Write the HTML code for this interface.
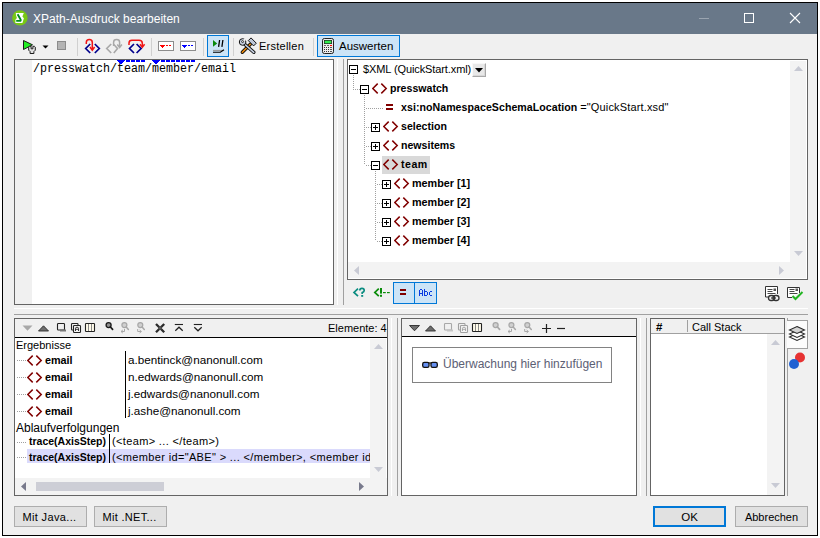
<!DOCTYPE html>
<html><head><meta charset="utf-8">
<style>
*{margin:0;padding:0;box-sizing:border-box}
html,body{width:820px;height:538px;overflow:hidden;background:#fff;font-family:"Liberation Sans",sans-serif;font-size:11px;color:#000}
.a{position:absolute}
#win{position:absolute;left:2px;top:2px;width:816px;height:534px;border:1px solid #000;background:#f0f0f0}
#title{position:absolute;left:3px;top:3px;width:814px;height:31px;background:#697889}
.box{position:absolute;border:1px solid #646464;background:#fff}
.sb{position:absolute;background:#f3f3f3}
.sep{position:absolute;width:1px;background:#d0d0d0}
.t{position:absolute;white-space:nowrap;line-height:14px}
.b{font-weight:bold}
.btn{position:absolute;border:1px solid #adadad;background:#e1e1e1;text-align:center;line-height:21px;font-size:11px}

.pb{position:absolute;width:9px;height:9px;border:1px solid #000;background:#fff}
.pb::before{content:"";position:absolute;left:1px;top:3px;width:5px;height:1px;background:#000}
.pb.p::after{content:"";position:absolute;left:3px;top:1px;width:1px;height:5px;background:#000}
.dv{position:absolute;width:1px;background:repeating-linear-gradient(to bottom,#a0a0a0 0,#a0a0a0 1px,transparent 1px,transparent 2px)}
.dh{position:absolute;height:1px;background:repeating-linear-gradient(to right,#a0a0a0 0,#a0a0a0 1px,transparent 1px,transparent 2px)}
.el{position:absolute;width:16px;height:12px}
</style></head><body>
<div id="win"></div>
<div id="title"></div>
<!-- title icon -->
<svg class="a" style="left:10px;top:9px" width="20" height="20" viewBox="10 9 20 20">
<circle cx="19.9" cy="17.9" r="7.7" fill="#78c814"/>
<path d="M15.8 13 H23.8 L22.4 16.4 L23.9 18.3 L22.4 22.9 H15.4 V19.8 L16.9 17.9 L16 15.3 Z" fill="#fff"/>
<path d="M17.6 14.2 L20.6 19.6 L20.8 21 M16.2 20.9 H21.2" fill="none" stroke="#008c1e" stroke-width="1.9"/>
</svg>
<div class="t" style="left:33px;top:12px;font-size:12px;color:#fff">XPath-Ausdruck bearbeiten</div>
<div class="a" style="left:699px;top:18px;width:10px;height:1px;background:#9aa4b0"></div>
<div class="a" style="left:744px;top:13px;width:10px;height:10px;border:1px solid #fff"></div>
<svg class="a" style="left:789px;top:12px" width="12" height="12" viewBox="0 0 12 12"><path d="M1 1L11 11M11 1L1 11" stroke="#fff" stroke-width="1.1"/></svg>


<!-- toolbar -->
<svg class="a" style="left:20px;top:38px" width="20" height="18" viewBox="20 38 20 18">
<path d="M23.5 40.5 L32.5 44.8 L23.5 49.5 Z" fill="#22ee22" stroke="#1a1a1a" stroke-width="1"/>
<path d="M28.7 47.2 L29.6 46.3 H31.1 V48.8 H32.9 V46.3 H34.4 L35.3 47.2 V50.2 L33.9 51.6 V53.5 H30.1 V51.6 L28.7 50.2 Z" fill="#e0e0e0" stroke="#1a1a1a" stroke-width="1"/>
</svg>
<svg class="a" style="left:42px;top:45px" width="7" height="4" viewBox="0 0 7 4"><path d="M0.5 0.5 L6.5 0.5 L3.5 3.5Z" fill="#000"/></svg>
<div class="a" style="left:57px;top:41px;width:9px;height:9px;background:#b4b4b4;border:1px solid #8c8c8c"></div>
<div class="sep" style="left:77px;top:38px;height:18px"></div>
<svg class="a" style="left:80px;top:36px" width="70" height="20" viewBox="80 36 70 20">
<path d="M90.2 44 L85.7 48.5 L90.2 53 M94.8 44 L99.3 48.5 L94.8 53" fill="none" stroke="#00008c" stroke-width="1.7"/>
<path d="M86.3 44 V42.5 Q86.3 39.6 89.3 39.6 Q92.3 39.6 92.3 42.5 V49" fill="none" stroke="#f01414" stroke-width="1.5"/>
<path d="M90 47 L92.3 50.3 L94.6 47" fill="none" stroke="#f01414" stroke-width="1.5"/>
<path d="M111.2 44 L106.7 48.5 L111.2 53" fill="none" stroke="#a8a8a8" stroke-width="1.6"/>
<path d="M113.8 44.5 L117.5 48.5 L113.8 53" fill="none" stroke="#a8a8a8" stroke-width="1.6"/>
<path d="M113.6 46 V42.3 Q113.6 39.6 116.6 39.6 Q119.6 39.6 119.6 42.3 V46.5" fill="none" stroke="#a8a8a8" stroke-width="1.5"/>
<path d="M117.3 44.5 L119.6 47.5 L121.9 44.5" fill="none" stroke="#a8a8a8" stroke-width="1.5"/>
<path d="M134 44 L129.5 48.5 L134 53 M136.6 44 L141.1 48.5 L136.6 53" fill="none" stroke="#00008c" stroke-width="1.7"/>
<path d="M129 45 V43 Q129 40.3 132 40.3 H139 Q142.3 40.3 142.3 43.3 V46.5" fill="none" stroke="#f01414" stroke-width="1.5"/>
<path d="M140 44.3 L142.3 47.3 L144.6 44.3" fill="none" stroke="#f01414" stroke-width="1.5"/>
</svg>
<div class="sep" style="left:151px;top:38px;height:18px"></div>
<svg class="a" style="left:158px;top:41px" width="16" height="10" viewBox="0 0 16 10" shape-rendering="crispEdges"><rect x="0.5" y="0.5" width="15" height="9" fill="#fff" stroke="#8c8c8c"/><path d="M2 4h5v1h-1v1h-1v1h-1v-1h-1v-1h-1z" fill="#f00"/><rect x="8" y="4" width="2" height="1" fill="#f00"/><rect x="11" y="4" width="2" height="1" fill="#f00"/></svg>
<svg class="a" style="left:180px;top:41px" width="16" height="10" viewBox="0 0 16 10" shape-rendering="crispEdges"><rect x="0.5" y="0.5" width="15" height="9" fill="#fff" stroke="#8c8c8c"/><path d="M2 4h5v1h-1v1h-1v1h-1v-1h-1v-1h-1z" fill="#00f"/><rect x="8" y="4" width="2" height="1" fill="#00f"/><rect x="11" y="4" width="2" height="1" fill="#00f"/></svg>
<div class="sep" style="left:203px;top:38px;height:18px"></div>
<div class="a" style="left:207px;top:35px;width:22px;height:22px;background:#cce4f7;border:1px solid #0078d7"></div>
<svg class="a" style="left:208px;top:36px" width="20" height="20" viewBox="208 36 20 20">
<path d="M213 40 L217.2 43.4 L213 46.8 Z" fill="#0a8a0a"/>
<path d="M219.6 40 L218.6 46.8 M222.9 40 L221.9 46.8" stroke="#000" stroke-width="1.3"/>
<path d="M213 50.5 H223.5" stroke="#9a9a9a" stroke-width="1.2"/>
<path d="M213 52.3 H220.3 L224 49.8" stroke="#000" stroke-width="1.1" fill="none"/>
</svg>
<div class="sep" style="left:233px;top:38px;height:18px"></div>
<svg class="a" style="left:238px;top:36px" width="20" height="20" viewBox="238 36 20 20">
<path d="M242.3 52.3 L250.3 44.3" stroke="#111" stroke-width="3.4" stroke-linecap="round"/>
<path d="M242.3 52.3 L250.3 44.3" stroke="#f28c0a" stroke-width="1.6" stroke-linecap="round"/>
<path d="M248.3 40.6 L251 37.9 L256.3 43.2 L253.6 45.9 Z" fill="#bcc6d8" stroke="#111" stroke-width="1"/>
<path d="M245 44.5 L253.8 52.3" stroke="#111" stroke-width="3.4" stroke-linecap="round"/>
<path d="M245 44.5 L253.8 52.3" stroke="#c8d2e4" stroke-width="1.6" stroke-linecap="round"/>
<circle cx="242.6" cy="42" r="3.3" fill="#c8d2e4" stroke="#111" stroke-width="1"/><path d="M242.8 41.8 L245.5 39" stroke="#f0f0f0" stroke-width="2.2"/><circle cx="242.6" cy="41.6" r="1" fill="#f0f0f0" stroke="#111" stroke-width="0.8"/>
</svg>
<div class="t" style="left:259px;top:39px;font-size:11px;letter-spacing:0.25px;color:#000">Erstellen</div>
<div class="sep" style="left:313px;top:38px;height:18px"></div>
<div class="a" style="left:317px;top:35px;width:83px;height:22px;background:#cce4f7;border:1px solid #0078d7"></div>
<svg class="a" style="left:320px;top:36px" width="16" height="20" viewBox="320 36 16 20">
<rect x="322.5" y="38.5" width="11" height="15" rx="1.8" fill="#ececec" stroke="#222" stroke-width="1"/>
<rect x="324" y="40" width="8" height="4" fill="#222"/><rect x="324.7" y="40.7" width="6.6" height="2.6" fill="#30ee50"/>
<g shape-rendering="crispEdges"><rect x="324" y="47" width="1" height="1" fill="#333"/><rect x="326" y="47" width="1" height="1" fill="#333"/><rect x="328" y="47" width="1" height="1" fill="#333"/><rect x="330" y="47" width="2" height="1" fill="#555"/><rect x="324" y="49" width="1" height="1" fill="#333"/><rect x="326" y="49" width="1" height="1" fill="#333"/><rect x="328" y="49" width="1" height="1" fill="#333"/><rect x="330" y="49" width="2" height="1" fill="#555"/><rect x="324" y="51" width="1" height="1" fill="#333"/><rect x="326" y="51" width="1" height="1" fill="#333"/><rect x="328" y="51" width="1" height="1" fill="#333"/><rect x="330" y="51" width="2" height="1" fill="#555"/><rect x="324" y="45" width="2" height="1" fill="#666"/><rect x="327" y="45" width="2" height="1" fill="#666"/><rect x="330" y="45" width="2" height="1" fill="#f00"/></g>
</svg>
<div class="t" style="left:339px;top:39px;font-size:11.5px;color:#000">Auswerten</div>

<!-- editor -->
<div class="box" style="left:14px;top:59px;width:320px;height:246px"></div>
<div class="a" style="left:15px;top:60px;width:17px;height:244px;background:#f0f0f0"></div>
<div class="t" style="left:33px;top:62px;font-family:'Liberation Mono',monospace;font-size:12.3px;transform:scaleX(0.9485);transform-origin:0 0">/presswatch/team/member/email</div>

<svg class="a" style="left:0;top:0" width="820" height="80" viewBox="0 0 820 80" shape-rendering="crispEdges"><path d="M117 60h8v1h-1v1h-1v1h-1v1h-2v-1h-1v-1h-1v-1h-1z" fill="#0000ff"/><rect x="126" y="60" width="4" height="2" fill="#0000ff"/><rect x="131" y="60" width="4" height="2" fill="#0000ff"/><rect x="136" y="60" width="4" height="2" fill="#0000ff"/><rect x="141" y="60" width="4" height="2" fill="#0000ff"/><path d="M152 60h8v1h-1v1h-1v1h-1v1h-2v-1h-1v-1h-1v-1h-1z" fill="#0000ff"/><rect x="161" y="60" width="4" height="2" fill="#0000ff"/><rect x="166" y="60" width="4" height="2" fill="#0000ff"/><rect x="171" y="60" width="4" height="2" fill="#0000ff"/><rect x="176" y="60" width="4" height="2" fill="#0000ff"/><rect x="181" y="60" width="4" height="2" fill="#0000ff"/><rect x="186" y="60" width="4" height="2" fill="#0000ff"/><rect x="191" y="60" width="4" height="2" fill="#0000ff"/></svg>
<!-- splitter v -->
<div class="a" style="left:337px;top:59px;width:1px;height:246px;background:#fff"></div>
<div class="a" style="left:343px;top:59px;width:1px;height:246px;background:#a0a0a0"></div>

<!-- tree panel -->
<div class="box" style="left:347px;top:59px;width:461px;height:221px"></div>
<div class="sb" style="left:790px;top:61px;width:16px;height:217px"></div>
<div class="sb" style="left:348px;top:262px;width:458px;height:16px"></div>

<!-- tree -->
<div class="pb" style="left:349px;top:65px"></div>
<div class="t" style="left:363px;top:62px;font-size:11px;letter-spacing:-0.1px;color:#000">$XML (QuickStart.xml)</div>
<div class="a" style="left:472px;top:63px;width:14px;height:14px;background:#e8e8e8;border:1px solid #a8a8a8;border-top-color:#f8f8f8;border-left-color:#f8f8f8;box-shadow:inset -1px -1px 0 #d8d8d8"></div>
<svg class="a" style="left:475px;top:68px" width="8" height="5" viewBox="0 0 8 5"><path d="M0 0 H8 L4 4.5Z" fill="#000"/></svg>
<div class="dv" style="left:353px;top:75px;height:15px"></div>
<div class="dh" style="left:355px;top:89px;width:5px"></div>
<div class="pb" style="left:360px;top:85px"></div>
<svg class="el" style="left:372px;top:83px" viewBox="0 0 16 12"><path d="M5.7 0.6 L0.8 5.5 L5.7 10.4 M9.3 0.6 L14.2 5.5 L9.3 10.4" fill="none" stroke="#800000" stroke-width="1.5"/></svg>
<div class="t b" style="left:390px;top:81px;font-size:10.6px">presswatch</div>
<div class="dv" style="left:364px;top:95px;height:70px"></div>
<div class="dh" style="left:366px;top:108px;width:18px"></div>
<div class="a" style="left:386px;top:104px;width:7px;height:2px;background:#800000"></div>
<div class="a" style="left:386px;top:108px;width:7px;height:2px;background:#800000"></div>
<div class="t" style="left:401px;top:100px;font-size:11px"><b style="font-size:10.6px;letter-spacing:0.05px">xsi:noNamespaceSchemaLocation</b> =<span style="letter-spacing:0.15px">"QuickStart.xsd"</span></div>
<div class="dh" style="left:366px;top:127px;width:5px"></div>
<div class="pb p" style="left:371px;top:123px"></div>
<svg class="el" style="left:383px;top:121px" viewBox="0 0 16 12"><path d="M5.7 0.6 L0.8 5.5 L5.7 10.4 M9.3 0.6 L14.2 5.5 L9.3 10.4" fill="none" stroke="#800000" stroke-width="1.5"/></svg>
<div class="t b" style="left:401px;top:119px;font-size:10.6px">selection</div>
<div class="dh" style="left:366px;top:146px;width:5px"></div>
<div class="pb p" style="left:371px;top:142px"></div>
<svg class="el" style="left:383px;top:140px" viewBox="0 0 16 12"><path d="M5.7 0.6 L0.8 5.5 L5.7 10.4 M9.3 0.6 L14.2 5.5 L9.3 10.4" fill="none" stroke="#800000" stroke-width="1.5"/></svg>
<div class="t b" style="left:401px;top:138px;font-size:10.6px">newsitems</div>
<div class="dh" style="left:366px;top:165px;width:5px"></div>
<div class="a" style="left:382px;top:156px;width:48px;height:18px;background:#d9d9d9"></div>
<div class="pb" style="left:371px;top:161px"></div>
<svg class="el" style="left:383px;top:159px" viewBox="0 0 16 12"><path d="M5.7 0.6 L0.8 5.5 L5.7 10.4 M9.3 0.6 L14.2 5.5 L9.3 10.4" fill="none" stroke="#800000" stroke-width="1.5"/></svg>
<div class="t b" style="left:401px;top:157px;font-size:10.6px;letter-spacing:0.5px">team</div>
<div class="dv" style="left:375px;top:171px;height:70px"></div>
<div class="dh" style="left:377px;top:184px;width:5px"></div>
<div class="pb p" style="left:382px;top:180px"></div>
<svg class="el" style="left:394px;top:178px" viewBox="0 0 16 12"><path d="M5.7 0.6 L0.8 5.5 L5.7 10.4 M9.3 0.6 L14.2 5.5 L9.3 10.4" fill="none" stroke="#800000" stroke-width="1.5"/></svg>
<div class="t b" style="left:412px;top:176px;font-size:10.8px">member [1]</div>
<div class="dh" style="left:377px;top:203px;width:5px"></div>
<div class="pb p" style="left:382px;top:199px"></div>
<svg class="el" style="left:394px;top:197px" viewBox="0 0 16 12"><path d="M5.7 0.6 L0.8 5.5 L5.7 10.4 M9.3 0.6 L14.2 5.5 L9.3 10.4" fill="none" stroke="#800000" stroke-width="1.5"/></svg>
<div class="t b" style="left:412px;top:195px;font-size:10.8px">member [2]</div>
<div class="dh" style="left:377px;top:222px;width:5px"></div>
<div class="pb p" style="left:382px;top:218px"></div>
<svg class="el" style="left:394px;top:216px" viewBox="0 0 16 12"><path d="M5.7 0.6 L0.8 5.5 L5.7 10.4 M9.3 0.6 L14.2 5.5 L9.3 10.4" fill="none" stroke="#800000" stroke-width="1.5"/></svg>
<div class="t b" style="left:412px;top:214px;font-size:10.8px">member [3]</div>
<div class="dh" style="left:377px;top:241px;width:5px"></div>
<div class="pb p" style="left:382px;top:237px"></div>
<svg class="el" style="left:394px;top:235px" viewBox="0 0 16 12"><path d="M5.7 0.6 L0.8 5.5 L5.7 10.4 M9.3 0.6 L14.2 5.5 L9.3 10.4" fill="none" stroke="#800000" stroke-width="1.5"/></svg>
<div class="t b" style="left:412px;top:233px;font-size:10.8px">member [4]</div>
<!-- splitter h -->
<div class="a" style="left:14px;top:308px;width:794px;height:1px;background:#fff"></div>
<div class="a" style="left:14px;top:314px;width:794px;height:1px;background:#a0a0a0"></div>

<!-- bottom left panel -->
<div class="box" style="left:14px;top:318px;width:374px;height:178px"></div>
<div class="a" style="left:15px;top:319px;width:372px;height:19px;background:#f0f0f0;border-bottom:1px solid #000"></div>
<div class="sb" style="left:370px;top:339px;width:16px;height:139px"></div>
<div class="sb" style="left:15px;top:478px;width:372px;height:17px"></div>

<div class="a" style="left:391px;top:318px;width:1px;height:178px;background:#fff"></div>
<div class="a" style="left:397px;top:318px;width:1px;height:178px;background:#a0a0a0"></div>

<!-- middle panel -->
<div class="box" style="left:401px;top:318px;width:236px;height:178px"></div>
<div class="a" style="left:402px;top:319px;width:234px;height:18px;background:#f0f0f0;border-bottom:1px solid #000"></div>

<div class="a" style="left:640px;top:318px;width:1px;height:178px;background:#fff"></div>
<div class="a" style="left:646px;top:318px;width:1px;height:178px;background:#a0a0a0"></div>

<!-- call stack -->
<div class="box" style="left:650px;top:318px;width:135px;height:178px"></div>
<div class="a" style="left:651px;top:319px;width:133px;height:15px;background:#f0f0f0;border-bottom:1px solid #a0a0a0"></div>
<div class="sb" style="left:767px;top:334px;width:17px;height:161px"></div>

<!-- tree toolbar -->
<svg class="a" style="left:348px;top:284px" width="46" height="18" viewBox="348 284 46 18">
<path d="M358 288.6 L354 292.4 L358 296.2" fill="none" stroke="#0a8c80" stroke-width="1.7"/>
<path d="M359.8 290.5 Q359.8 288.3 362 288.3 Q364.2 288.3 364.2 290.4 Q364.2 291.8 362.2 292.6 V294" fill="none" stroke="#0a8c80" stroke-width="1.7"/>
<rect x="361.2" y="295" width="2" height="1.8" fill="#0a8c80"/>
<path d="M378.8 288.6 L374.8 292.4 L378.8 296.2" fill="none" stroke="#0a8c0a" stroke-width="1.7"/>
<rect x="380" y="288" width="2" height="5.6" fill="#0a8c0a"/><rect x="380" y="294.8" width="2" height="2" fill="#0a8c0a"/>
<rect x="383" y="292" width="2.8" height="1.2" fill="#0a8c0a"/><rect x="387" y="292" width="2.8" height="1.2" fill="#0a8c0a"/>
</svg>

<div class="a" style="left:393px;top:282px;width:22px;height:22px;background:#cce4f7;border:1px solid #0078d7"></div>
<div class="a" style="left:414px;top:282px;width:23px;height:22px;background:#cce4f7;border:1px solid #0078d7"></div>
<div class="a" style="left:400px;top:289px;width:6px;height:2px;background:#800000"></div>
<div class="a" style="left:400px;top:293px;width:6px;height:2px;background:#800000"></div>
<svg class="a" style="left:0;top:280px" width="820" height="30" viewBox="0 280 820 30" shape-rendering="crispEdges"><rect x="419" y="290" width="1" height="6" fill="#0a3ce0"/><rect x="422" y="290" width="1" height="6" fill="#0a3ce0"/><rect x="420" y="289" width="2" height="1" fill="#0a3ce0"/><rect x="420" y="293" width="2" height="1" fill="#0a3ce0"/><rect x="424" y="289" width="1" height="7" fill="#0a3ce0"/><rect x="425" y="291" width="2" height="1" fill="#0a3ce0"/><rect x="427" y="292" width="1" height="3" fill="#0a3ce0"/><rect x="425" y="295" width="2" height="1" fill="#0a3ce0"/><rect x="429" y="292" width="1" height="3" fill="#0a3ce0"/><rect x="430" y="291" width="2" height="1" fill="#0a3ce0"/><rect x="430" y="295" width="2" height="1" fill="#0a3ce0"/></svg>
<svg class="a" style="left:764px;top:285px" width="18" height="17" viewBox="0 0 18 17">
<path d="M1.5 12 V1.5 H13.5 V9" fill="#fff" stroke="#333" stroke-width="1"/>
<path d="M1.5 12 H4" stroke="#333"/>
<path d="M3.5 4.5h5M3.5 6.5h5M3.5 8.5h8" stroke="#333" stroke-width="0.9"/><rect x="9.5" y="3.5" width="2.5" height="2.5" fill="#555"/>
<rect x="4.5" y="10.5" width="6" height="5" rx="2.5" fill="none" stroke="#333" stroke-width="1.3"/>
<rect x="9" y="10.5" width="6" height="5" rx="2.5" fill="none" stroke="#333" stroke-width="1.3"/>
<path d="M7 13h5" stroke="#333" stroke-width="1.2"/>
</svg>
<svg class="a" style="left:786px;top:286px" width="18" height="15" viewBox="0 0 18 15">
<path d="M6 11.5 H1.5 V1.5 H13.5 V7" fill="#fff" stroke="#333" stroke-width="1"/>
<path d="M3.5 3.5h5M3.5 5.5h5M3.5 7.5h8" stroke="#333" stroke-width="0.9"/><rect x="9.5" y="2.5" width="2.5" height="2.5" fill="#555"/>
<path d="M6.5 10 L9.5 13 L16.5 6" fill="none" stroke="#22b422" stroke-width="2"/>
</svg>
<svg class="a" style="left:22px;top:325px" width="11" height="7" viewBox="0 0 11 7"><path d="M0.5 0.5 H10.5 L5.5 5.8Z" fill="#a8a8a8"/></svg>
<svg class="a" style="left:38px;top:325px" width="11" height="7" viewBox="0 0 11 7"><path d="M0.5 6 H10.5 L5.5 0.8Z" fill="#6e6e6e" stroke="#2a2a2a" stroke-width="0.9" stroke-linejoin="round"/></svg>
<svg class="a" style="left:54px;top:319px" width="44" height="18" viewBox="54 319 44 18"><g transform="translate(0 0)"><rect x="57.5" y="323.5" width="7" height="6.5" rx="0.8" fill="none" stroke="#222" stroke-width="1.1"/><rect x="60" y="329.5" width="6" height="2" fill="#777"/><rect x="71.5" y="323.5" width="6.5" height="6.5" rx="0.8" fill="none" stroke="#222" stroke-width="1.1"/><rect x="73.5" y="325.5" width="7" height="7" rx="0.8" fill="#f4f4f4" stroke="#222" stroke-width="1.1"/><path d="M75.5 331 V328.3 Q75.5 327.2 77 327.2 Q78.5 327.2 78.5 328.3 V331 M75.5 329.3 H78.5" fill="none" stroke="#222" stroke-width="0.9"/><rect x="85.5" y="323.5" width="9" height="8" rx="0.6" fill="#fffbea" stroke="#222" stroke-width="1.1"/><path d="M88.5 324 V331 M91.5 324 V331" stroke="#888" stroke-width="1"/></g></svg>
<svg class="a" style="left:102px;top:319px" width="48" height="18" viewBox="102 319 48 18"><g transform="translate(0 0)"><circle cx="108.6" cy="325.1" r="2.5" fill="#909090" stroke="#1a1a1a" stroke-width="1.3"/><path d="M110.4 327 L112.6 329.4" stroke="#1a1a1a" stroke-width="1.7" stroke-linecap="round"/><circle cx="124.4" cy="325.1" r="2.5" fill="#d0d0d0" stroke="#a8a8a8" stroke-width="1.2"/><path d="M126.2 327 L128.4 329.4" stroke="#a8a8a8" stroke-width="1.5" stroke-linecap="round"/><path d="M124.5 329 V331.5 H121.2 M122.8 330 L121 331.5 L122.8 333" fill="none" stroke="#a8a8a8" stroke-width="1"/><circle cx="140.3" cy="325.1" r="2.5" fill="#d0d0d0" stroke="#a8a8a8" stroke-width="1.2"/><path d="M142.1 327 L144.3 329.4" stroke="#a8a8a8" stroke-width="1.5" stroke-linecap="round"/><path d="M137.7 329 V331.5 H141.2 M139.6 330 L141.4 331.5 L139.6 333" fill="none" stroke="#a8a8a8" stroke-width="1"/></g></svg>
<svg class="a" style="left:150px;top:319px" width="60" height="18" viewBox="150 319 60 18">
<path d="M156 324 L164.2 332.2 M164.2 324 L156 332.2" stroke="#2a2a2a" stroke-width="2.3"/>
<rect x="158.6" y="326.6" width="3" height="3" fill="#555"/>
<path d="M174.8 324.5 H183" stroke="#222" stroke-width="1.1"/>
<path d="M175.3 330.8 L179 327.2 L182.7 330.8" fill="none" stroke="#222" stroke-width="1.2"/>
<path d="M193.8 324.5 H202" stroke="#222" stroke-width="1.1"/>
<path d="M194.3 327.2 L198 330.8 L201.7 327.2" fill="none" stroke="#222" stroke-width="1.2"/>
</svg>


<div class="t" style="left:328px;top:321px;font-size:11px">Elemente: 4</div>
<svg class="a" style="left:409px;top:325px" width="11" height="7" viewBox="0 0 11 7"><path d="M0.5 0.5 H10.5 L5.5 5.8Z" fill="#6e6e6e" stroke="#2a2a2a" stroke-width="0.9" stroke-linejoin="round"/></svg>
<svg class="a" style="left:425px;top:325px" width="11" height="7" viewBox="0 0 11 7"><path d="M0.5 6 H10.5 L5.5 0.8Z" fill="#6e6e6e" stroke="#2a2a2a" stroke-width="0.9" stroke-linejoin="round"/></svg>
<svg class="a" style="left:441px;top:319px" width="44" height="18" viewBox="54 319 44 18"><g transform="translate(0 0)"><rect x="57.5" y="323.5" width="7" height="6.5" rx="0.8" fill="none" stroke="#a8a8a8" stroke-width="1.1"/><rect x="60" y="329.5" width="6" height="2" fill="#c4c4c4"/><rect x="71.5" y="323.5" width="6.5" height="6.5" rx="0.8" fill="none" stroke="#a0a0a0" stroke-width="1.1"/><rect x="73.5" y="325.5" width="7" height="7" rx="0.8" fill="#f4f4f4" stroke="#a0a0a0" stroke-width="1.1"/><path d="M75.5 331 V328.3 Q75.5 327.2 77 327.2 Q78.5 327.2 78.5 328.3 V331 M75.5 329.3 H78.5" fill="none" stroke="#a0a0a0" stroke-width="0.9"/><rect x="85.5" y="323.5" width="9" height="8" rx="0.6" fill="#fffbea" stroke="#222" stroke-width="1.1"/><path d="M88.5 324 V331 M91.5 324 V331" stroke="#888" stroke-width="1"/></g></svg>
<svg class="a" style="left:489px;top:319px" width="48" height="18" viewBox="489 319 48 18"><g transform="translate(387 0)"><circle cx="108.6" cy="325.1" r="2.5" fill="#d0d0d0" stroke="#a8a8a8" stroke-width="1.3"/><path d="M110.4 327 L112.6 329.4" stroke="#a8a8a8" stroke-width="1.7" stroke-linecap="round"/><circle cx="124.4" cy="325.1" r="2.5" fill="#d0d0d0" stroke="#a8a8a8" stroke-width="1.2"/><path d="M126.2 327 L128.4 329.4" stroke="#a8a8a8" stroke-width="1.5" stroke-linecap="round"/><path d="M124.5 329 V331.5 H121.2 M122.8 330 L121 331.5 L122.8 333" fill="none" stroke="#a8a8a8" stroke-width="1"/><circle cx="140.3" cy="325.1" r="2.5" fill="#d0d0d0" stroke="#a8a8a8" stroke-width="1.2"/><path d="M142.1 327 L144.3 329.4" stroke="#a8a8a8" stroke-width="1.5" stroke-linecap="round"/><path d="M137.7 329 V331.5 H141.2 M139.6 330 L141.4 331.5 L139.6 333" fill="none" stroke="#a8a8a8" stroke-width="1"/></g></svg>
<svg class="a" style="left:542px;top:324px" width="9" height="9" viewBox="0 0 9 9"><path d="M0 4.5H9M4.5 0V9" stroke="#222" stroke-width="1.2"/></svg>
<svg class="a" style="left:557px;top:324px" width="8" height="9" viewBox="0 0 8 9"><path d="M0 4.5H8" stroke="#222" stroke-width="1.2"/></svg>
<div class="t" style="left:16px;top:338px;font-size:11px">Ergebnisse</div>
<div class="dh" style="left:17px;top:360px;width:10px"></div>
<svg class="el" style="left:27px;top:355px" viewBox="0 0 16 12"><path d="M5.7 0.6 L0.8 5.5 L5.7 10.4 M9.3 0.6 L14.2 5.5 L9.3 10.4" fill="none" stroke="#800000" stroke-width="1.5"/></svg>
<div class="t b" style="left:45px;top:353px;font-size:10.8px">email</div>
<div class="t" style="left:128px;top:353px;font-size:11.7px">a.bentinck@nanonull.com</div>
<div class="dh" style="left:17px;top:377px;width:10px"></div>
<svg class="el" style="left:27px;top:372px" viewBox="0 0 16 12"><path d="M5.7 0.6 L0.8 5.5 L5.7 10.4 M9.3 0.6 L14.2 5.5 L9.3 10.4" fill="none" stroke="#800000" stroke-width="1.5"/></svg>
<div class="t b" style="left:45px;top:370px;font-size:10.8px">email</div>
<div class="t" style="left:128px;top:370px;font-size:11.7px">n.edwards@nanonull.com</div>
<div class="dh" style="left:17px;top:394px;width:10px"></div>
<svg class="el" style="left:27px;top:389px" viewBox="0 0 16 12"><path d="M5.7 0.6 L0.8 5.5 L5.7 10.4 M9.3 0.6 L14.2 5.5 L9.3 10.4" fill="none" stroke="#800000" stroke-width="1.5"/></svg>
<div class="t b" style="left:45px;top:387px;font-size:10.8px">email</div>
<div class="t" style="left:128px;top:387px;font-size:11.7px">j.edwards@nanonull.com</div>
<div class="dh" style="left:17px;top:411px;width:10px"></div>
<svg class="el" style="left:27px;top:406px" viewBox="0 0 16 12"><path d="M5.7 0.6 L0.8 5.5 L5.7 10.4 M9.3 0.6 L14.2 5.5 L9.3 10.4" fill="none" stroke="#800000" stroke-width="1.5"/></svg>
<div class="t b" style="left:45px;top:404px;font-size:10.8px">email</div>
<div class="t" style="left:128px;top:404px;font-size:11.7px">j.ashe@nanonull.com</div>
<div class="a" style="left:125px;top:351px;width:1px;height:67px;background:#000"></div>
<div class="t" style="left:16px;top:421px;font-size:12px">Ablaufverfolgungen</div>
<div class="a" style="left:27px;top:449px;width:343px;height:14px;background:#dadafc"></div>
<div class="dh" style="left:17px;top:442px;width:10px"></div>
<div class="t b" style="left:29px;top:434px;font-size:10.5px">trace(AxisStep)</div>
<div class="t" style="left:112px;top:434px;font-size:11px;letter-spacing:0.35px;width:258px;overflow:hidden">(&lt;team&gt; ... &lt;/team&gt;)</div>
<div class="dh" style="left:17px;top:457px;width:10px"></div>
<div class="t b" style="left:29px;top:450px;font-size:10.5px">trace(AxisStep)</div>
<div class="t" style="left:112px;top:450px;font-size:11px;letter-spacing:0.35px;width:258px;overflow:hidden">(&lt;member id="ABE" &gt; ... &lt;/member&gt;, &lt;member id="</div>
<div class="a" style="left:109px;top:434px;width:1px;height:29px;background:#000"></div>
<svg class="a" style="left:374px;top:344px" width="9" height="5" viewBox="0 0 9 5"><path d="M0 5H9L4.5 0Z" fill="#c8cad4"/></svg>
<svg class="a" style="left:374px;top:467px" width="9" height="5" viewBox="0 0 9 5"><path d="M0 0H9L4.5 5Z" fill="#c8cad4"/></svg>
<svg class="a" style="left:21px;top:482px" width="5" height="9" viewBox="0 0 5 9"><path d="M5 0V9L0 4.5Z" fill="#787a8c"/></svg>
<svg class="a" style="left:359px;top:482px" width="5" height="9" viewBox="0 0 5 9"><path d="M0 0V9L5 4.5Z" fill="#787a8c"/></svg>
<div class="a" style="left:36px;top:482px;width:128px;height:9px;background:#cdced6"></div>
<div class="a" style="left:412px;top:347px;width:200px;height:36px;border:1px solid #828282;background:#fff"></div>
<svg class="a" style="left:420px;top:359px" width="20" height="11" viewBox="420 359 20 11"><path d="M428 363 H432" stroke="#111" stroke-width="1.2"/><rect x="422.7" y="362.3" width="6.3" height="5" rx="1.6" fill="#6690f0" stroke="#111" stroke-width="1.3"/><rect x="431" y="362.3" width="6.3" height="5" rx="1.6" fill="#6690f0" stroke="#111" stroke-width="1.3"/></svg>
<div class="t" style="left:443px;top:357px;font-size:12px;color:#5c6074">Überwachung hier hinzufügen</div>
<div class="t" style="left:656px;top:320px;font-size:11.5px;font-weight:bold">#</div>
<div class="a" style="left:687px;top:320px;width:1px;height:12px;background:#a0a0a0"></div>
<div class="t" style="left:692px;top:320px;font-size:11px">Call Stack</div>
<svg class="a" style="left:771px;top:340px" width="9" height="5" viewBox="0 0 9 5"><path d="M0 5H9L4.5 0Z" fill="#c8cad4"/></svg>
<svg class="a" style="left:771px;top:483px" width="9" height="5" viewBox="0 0 9 5"><path d="M0 0H9L4.5 5Z" fill="#c8cad4"/></svg>
<div class="a" style="left:787px;top:318px;width:1px;height:3px;background:#a0a0a0"></div><div class="a" style="left:787px;top:348px;width:1px;height:148px;background:#a0a0a0"></div>
<div class="a" style="left:787px;top:320px;width:21px;height:29px;background:#fcfcfc;border:1px solid #a0a0a0;border-left:none"></div>
<svg class="a" style="left:788px;top:324px" width="18" height="18" viewBox="788 324 18 18">
<path d="M797 333.5 L804.5 337 L797 340.5 L789.5 337Z" fill="#fff" stroke="#2a2a2a" stroke-width="1.1"/>
<path d="M797 330.5 L804.5 334 L797 337.5 L789.5 334Z" fill="#fff" stroke="#2a2a2a" stroke-width="1.1"/>
<path d="M797 326.5 L804.5 330 L797 333.5 L789.5 330Z" fill="#d4d4d4" stroke="#2a2a2a" stroke-width="1.1"/>
</svg>
<svg class="a" style="left:788px;top:351px" width="18" height="18" viewBox="0 0 18 18"><circle cx="12" cy="6.5" r="5" fill="#e63232"/><circle cx="6" cy="13" r="5" fill="#2262d2"/></svg>
<svg class="a" style="left:794px;top:66px" width="9" height="5" viewBox="0 0 9 5"><path d="M0 5H9L4.5 0Z" fill="#c8cad4"/></svg>
<svg class="a" style="left:794px;top:251px" width="9" height="5" viewBox="0 0 9 5"><path d="M0 0H9L4.5 5Z" fill="#c8cad4"/></svg>
<svg class="a" style="left:354px;top:266px" width="5" height="9" viewBox="0 0 5 9"><path d="M5 0V9L0 4.5Z" fill="#c8cad4"/></svg>
<svg class="a" style="left:779px;top:266px" width="5" height="9" viewBox="0 0 5 9"><path d="M0 0V9L5 4.5Z" fill="#c8cad4"/></svg>
<!-- buttons -->
<div class="btn" style="left:14px;top:506px;width:73px;height:21px;letter-spacing:0.35px;text-indent:-2px">Mit Java...</div>
<div class="btn" style="left:94px;top:506px;width:73px;height:21px;letter-spacing:0.3px;text-indent:-2px">Mit .NET...</div>
<div class="btn" style="left:653px;top:506px;width:73px;height:21px;border:2px solid #0078d7;line-height:19px;font-size:11.5px">OK</div>
<div class="btn" style="left:735px;top:506px;width:73px;height:21px">Abbrechen</div>
</body></html>
